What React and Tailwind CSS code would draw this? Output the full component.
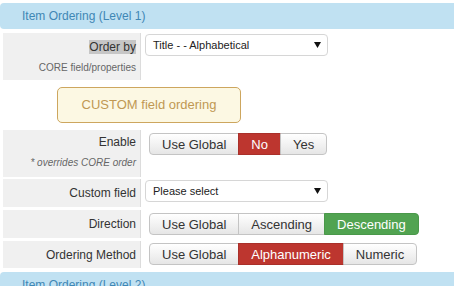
import React from 'react';

// gradient default button (bootstrap 2 style)
const btnBase =
  'h-[22px] px-3 flex items-center border text-[13px] leading-none -ml-px first:ml-0 first:rounded-l-[4px] last:rounded-r-[4px]';
const btnDefault =
  'bg-gradient-to-b from-white to-[#e6e6e6] border-[#c4c4c4] text-[#333] shadow-[inset_0_1px_0_rgba(255,255,255,0.3)]';
const btnRed = 'bg-[#bd362f] border-[#a9302a] text-white';
const btnGreen = 'bg-[#51a351] border-[#4a984a] text-white';

function BtnGroup({ items }) {
  return (
    <div className="flex">
      {items.map((it) => (
        <div
          key={it.label}
          className={`${btnBase} ${it.tone === 'red' ? btnRed : it.tone === 'green' ? btnGreen : btnDefault}`}
        >
          {it.label}
        </div>
      ))}
    </div>
  );
}

function Select({ value }) {
  return (
    <div className="w-[183px] h-[22px] border border-[#d6d6d6] rounded-[4px] bg-white flex items-center justify-between pl-[7px] pr-[6px] text-[11px] text-[#222]">
      <span>{value}</span>
      <svg width="7" height="6" viewBox="0 0 7 6">
        <path d="M0 0h7L3.5 6z" fill="#111" />
      </svg>
    </div>
  );
}

function Label({ children, hint, italic, className = '' }) {
  return (
    <div className={`ml-[3px] w-[138px] shrink-0 bg-[#f0f0f0] border-r border-[#dcdcdc] text-right pr-[4px] ${className}`}>
      {children}
      {hint && (
        <div className={`text-[10px] text-[#666] mt-[6px] leading-[14px] ${italic ? 'italic' : ''}`}>{hint}</div>
      )}
    </div>
  );
}

export default function App() {
  return (
    <div className="w-[454px] h-[286px] overflow-hidden bg-white text-[#333] font-['Liberation_Sans',Arial,sans-serif]">
      {/* Level 1 header */}
      <div className="mt-[3px] h-[26px] rounded-l-[4px] bg-[#c0e1f2] flex items-center pl-[22px] text-[12px] text-[#3f87b5]">
        Item Ordering (Level 1)
      </div>

      {/* Order by */}
      <div className="mt-[4px] flex">
        <Label className="h-[47px] pt-[7px] text-[12px] leading-[15px]" hint="CORE field/properties">
          <span className="bg-[#c6c6c6]">Order by</span>
        </Label>
        <div className="ml-[4px] mt-[1px]">
          <Select value="Title - - Alphabetical" />
        </div>
      </div>

      {/* custom field notice */}
      <div className="mt-[7px] ml-[57px] w-[184px] h-[36px] rounded-[5px] border border-[#cda65e] bg-[#fcf8e3] flex items-center justify-center text-[13px] text-[#c09853]">
        CUSTOM field ordering
      </div>

      {/* Enable */}
      <div className="mt-[7px] flex">
        <Label className="h-[47px] pt-[5px] text-[12px] leading-[15px]" hint="* overrides CORE order" italic>
          Enable
        </Label>
        <div className="ml-[8px] mt-[3px]">
          <BtnGroup items={[{ label: 'Use Global' }, { label: 'No', tone: 'red' }, { label: 'Yes' }]} />
        </div>
      </div>

      {/* Custom field */}
      <div className="mt-[2px] flex">
        <Label className="h-[28px] flex items-center justify-end text-[12px]">Custom field</Label>
        <div className="ml-[4px] mt-[1px]">
          <Select value="Please select" />
        </div>
      </div>

      {/* Direction */}
      <div className="mt-[3px] flex">
        <Label className="h-[28px] flex items-center justify-end text-[12px]">Direction</Label>
        <div className="ml-[8px] mt-[3px]">
          <BtnGroup items={[{ label: 'Use Global' }, { label: 'Ascending' }, { label: 'Descending', tone: 'green' }]} />
        </div>
      </div>

      {/* Ordering Method */}
      <div className="mt-[3px] flex">
        <Label className="h-[27px] flex items-center justify-end text-[12px]">Ordering Method</Label>
        <div className="ml-[8px] mt-[2px]">
          <BtnGroup items={[{ label: 'Use Global' }, { label: 'Alphanumeric', tone: 'red' }, { label: 'Numeric' }]} />
        </div>
      </div>

      {/* Level 2 header */}
      <div className="mt-[4px] h-[26px] rounded-l-[4px] bg-[#c0e1f2] flex items-center pl-[22px] text-[12px] text-[#3f87b5]">
        Item Ordering (Level 2)
      </div>
    </div>
  );
}
